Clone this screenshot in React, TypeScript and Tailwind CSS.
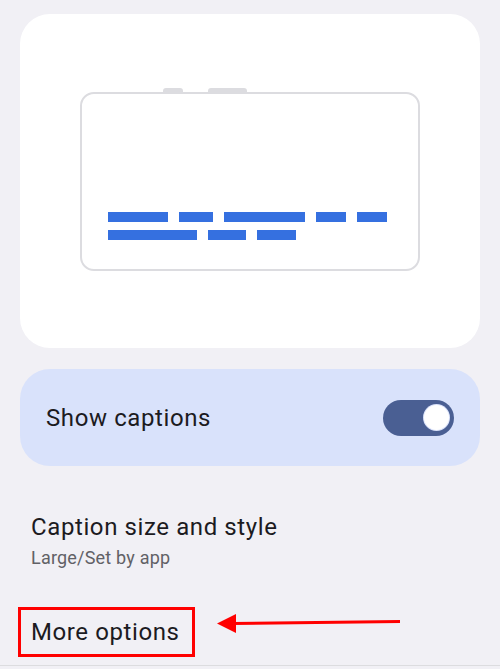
import React from 'react';

const row1 = [60, 34, 81, 30, 30];
const row2 = [89, 38, 39];

function CaptionBars({ widths }: { widths: number[] }) {
  return (
    <div className="flex gap-[11px]">
      {widths.map((w, i) => (
        <div key={i} className="h-[10px] bg-[#3570e0]" style={{ width: w }} />
      ))}
    </div>
  );
}

export default function App() {
  return (
    <div className="relative w-[500px] h-[669px] overflow-hidden bg-[#f1f0f5] font-['Roboto',sans-serif] text-[#1c1b1f]">
      <div className="px-5 pt-[14px]">
        {/* preview card */}
        <div className="h-[334px] rounded-[30px] bg-white flex items-start justify-center pt-[78px]">
          <div className="relative">
            <div className="absolute -top-[4px] left-[83px] w-[20px] h-[6px] rounded-t-[3px] bg-[#dcdce0]" />
            <div className="absolute -top-[4px] left-[128px] w-[39px] h-[6px] rounded-t-[3px] bg-[#dcdce0]" />
            <div className="relative w-[340px] h-[179px] rounded-[14px] border-2 border-[#dcdce0] bg-white flex flex-col justify-end gap-[8px] pl-[26px] pb-[29px]">
              <CaptionBars widths={row1} />
              <CaptionBars widths={row2} />
            </div>
          </div>
        </div>

        {/* show captions */}
        <div className="mt-[21px] h-[97px] rounded-[30px] bg-[#d9e2fb] flex items-center justify-between pl-[26px] pr-[26px]">
          <span className="text-[24px] tracking-[0.6px]">Show captions</span>
          <div className="w-[71px] h-[36px] rounded-full bg-[#4a5f93] flex items-center justify-end pr-[4px]">
            <div className="w-[27px] h-[27px] rounded-full bg-[#dbe3fb] flex items-center justify-center">
              <div className="w-[25px] h-[25px] rounded-full bg-white" />
            </div>
          </div>
        </div>
      </div>

      {/* caption size */}
      <div className="pl-[31px] pt-[46px]">
        <div className="text-[24px] leading-[30px] tracking-[0.6px]">Caption size and style</div>
        <div className="text-[18px] leading-[24px] tracking-[0.2px] text-[#616166] mt-[4px]">Large/Set by app</div>
      </div>

      {/* more options */}
      <div className="pl-[18px] mt-[37px]">
        <div className="inline-flex items-center w-[177px] h-[50px] border-[3px] border-[#ff0000] pl-[10px]">
          <span className="text-[24px] tracking-[0.6px]">More options</span>
        </div>
      </div>

      {/* annotation arrow */}
      <svg className="absolute left-[214px] top-[612px]" width="190" height="24" viewBox="0 0 190 24">
        <line x1="18" y1="11.5" x2="186" y2="9.5" stroke="#ff0000" strokeWidth="3" />
        <polygon points="3,11.5 22,2 22,21" fill="#ff0000" />
      </svg>

      <div className="absolute left-0 right-0 bottom-[3px] h-[1px] bg-[#dcdcdf]" />
    </div>
  );
}
